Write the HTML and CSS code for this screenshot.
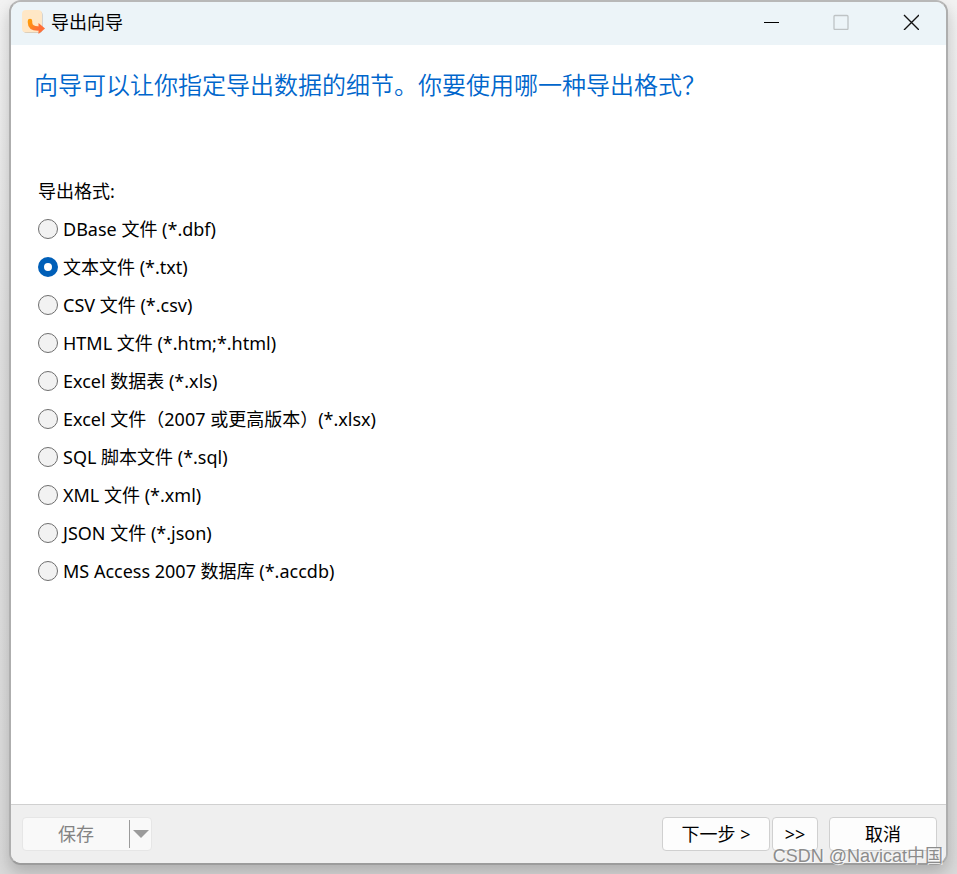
FILE: index.html
```html
<!DOCTYPE html>
<html lang="zh-CN">
<head>
    <meta charset="UTF-8">
    <meta name="viewport" content="width=device-width, initial-scale=1.0">
    <title>导出向导</title>
    <link rel="stylesheet" href="styles.css">
</head>
<body>
    <div class="window">
        <header class="titlebar">
            <svg class="app-icon" width="24" height="24" viewBox="0 0 24 24">
                <defs>
                    <linearGradient id="arrow" x1="0" y1="0" x2="1" y2="1">
                        <stop offset="0" stop-color="#ff9a0a"/>
                        <stop offset="1" stop-color="#ff7038"/>
                    </linearGradient>
                </defs>
                <rect x="1" y="1" width="19.500" height="22" rx="4" fill="#b9b4ac"/>
                <rect x="0" y="0" width="20" height="22.500" rx="4" fill="#ffe7c6"/>
                <path d="M8 11v1.500c0 4 3 6 8 6" fill="none" stroke="url(#arrow)" stroke-width="4.500" stroke-linecap="round"/>
                <path d="M16.500 13l6.500 5.500-6.500 5.500z" fill="#ff7038"/>
            </svg>
            <span class="title">导出向导</span>
            <div class="window-controls">
                <button type="button" aria-label="最小化">
                    <svg width="16" height="16" viewBox="0 0 16 16"><path d="M1 8.500h15" stroke="#000"/></svg>
                </button>
                <button type="button" aria-label="最大化" disabled>
                    <svg width="16" height="16" viewBox="0 0 16 16"><rect x="1" y="1.500" width="14" height="14" rx="1" fill="none" stroke="#bec3c5" stroke-width="1.300"/></svg>
                </button>
                <button type="button" aria-label="关闭">
                    <svg width="16" height="16" viewBox="0 0 16 16"><path d="M1 1l15 15M16 1L1 16" stroke="#111" stroke-width="1.400"/></svg>
                </button>
            </div>
        </header>

        <main class="content">
            <h1>向导可以让你指定导出数据的细节。你要使用哪一种导出格式？</h1>
            <fieldset class="formats">
                <legend>导出格式:</legend>
                <label><input type="radio" name="format" value="dbf">DBase 文件 (*.dbf)</label>
                <label><input type="radio" name="format" value="txt" checked>文本文件 (*.txt)</label>
                <label><input type="radio" name="format" value="csv">CSV 文件 (*.csv)</label>
                <label><input type="radio" name="format" value="html">HTML 文件 (*.htm;*.html)</label>
                <label><input type="radio" name="format" value="xls">Excel 数据表 (*.xls)</label>
                <label><input type="radio" name="format" value="xlsx">Excel 文件（2007 或更高版本）(*.xlsx)</label>
                <label><input type="radio" name="format" value="sql">SQL 脚本文件 (*.sql)</label>
                <label><input type="radio" name="format" value="xml">XML 文件 (*.xml)</label>
                <label><input type="radio" name="format" value="json">JSON 文件 (*.json)</label>
                <label><input type="radio" name="format" value="accdb">MS Access 2007 数据库 (*.accdb)</label>
            </fieldset>
        </main>

        <footer class="actions">
            <div class="split-button">
                <button type="button" class="save" disabled>保存</button>
                <button type="button" class="save-menu" aria-label="更多保存选项" disabled>
                    <svg width="16" height="8" viewBox="0 0 16 8"><path d="M0 0h16L8 8z" fill="#9b9b9b"/></svg>
                </button>
            </div>
            <button type="button" class="btn next">下一步 &gt;</button>
            <button type="button" class="btn last">&gt;&gt;</button>
            <button type="button" class="btn cancel">取消</button>
        </footer>
    </div>
    <div class="watermark">CSDN @Navicat中国</div>
</body>
</html>
```

FILE: styles.css
```css
* {
    box-sizing: border-box;
}

body {
    display: flex;
    min-height: 100vh;
    margin: 0;
    padding: 0 9px 9px;
    background: linear-gradient(#f2f2f2, #e2e2e2 40%, #dadada);
    font-family: "Noto Sans", "Noto Sans CJK SC", sans-serif;
    font-size: 18px;
    line-height: 24px;
    color: #000;
    position: relative;
}

button {
    font: inherit;
    color: inherit;
}

.window {
    flex: 1;
    display: flex;
    flex-direction: column;
    border: 2px solid #aeaeae;
    border-top-color: #b8b8b8;
    border-bottom-color: #9c9c9c;
    border-radius: 12px;
    overflow: hidden;
    background: #fff;
    box-shadow: 0 8px 16px rgba(0, 0, 0, 0.2);
}

.titlebar {
    display: flex;
    align-items: center;
    height: 43px;
    padding: 0 0 3px 11px;
    background: #ecf4f8;
}

.title {
    margin-left: 5px;
}

.window-controls {
    display: flex;
    height: 100%;
    margin-left: auto;
}

.window-controls button {
    display: flex;
    align-items: center;
    justify-content: center;
    width: 70px;
    padding: 0;
    border: 0;
    background: none;
}

.content {
    flex: 1;
    padding: 23px;
}

h1 {
    margin: 0;
    font-family: "Noto Sans CJK SC", sans-serif;
    font-size: 24px;
    font-weight: 350;
    line-height: 32px;
    color: #0066cc;
}

.formats {
    margin: 72px 0 0;
    padding: 0 4px;
    border: 0;
}

.formats legend {
    padding: 0;
    line-height: 38px;
}

.formats label {
    display: flex;
    align-items: center;
    gap: 5px;
    height: 38px;
}

.formats input {
    appearance: none;
    width: 20px;
    height: 20px;
    margin: 0;
    border: 1px solid #6e6e6e;
    border-radius: 50%;
    background: #f2f2f2;
}

.formats input:checked {
    border: 6px solid #005fb8;
    background: #fff;
}

.actions {
    display: flex;
    align-items: center;
    height: 59px;
    padding: 0 9px 0 11px;
    border-top: 1px solid #d0d0d0;
    background: #efefef;
}

.split-button {
    display: flex;
    align-items: center;
    width: 130px;
    height: 34px;
    margin-right: auto;
    border: 1px solid #e6e6e6;
    border-radius: 4px;
    background: #f9f9f9;
    color: #838383;
}

.split-button button {
    padding: 0;
    border: 0;
    background: none;
}

.save {
    flex: 1;
}

.split-button .save-menu {
    display: flex;
    align-items: center;
    justify-content: center;
    width: 22px;
    height: 28px;
    border-left: 1px solid #9b9b9b;
}

.btn {
    height: 34px;
    padding: 0;
    border: 1px solid #d0d0d0;
    border-radius: 4px;
    background: #fdfdfd;
}

.next,
.cancel {
    width: 108px;
}

.last {
    width: 46px;
    margin: 0 11px 0 2px;
}

.watermark {
    position: absolute;
    right: 14px;
    bottom: 6px;
    font-family: "Liberation Sans", "Noto Sans CJK SC", sans-serif;
    color: #8c8c8c;
    text-shadow: 1px 1px 0 rgba(255, 255, 255, 0.8);
    pointer-events: none;
}
```
